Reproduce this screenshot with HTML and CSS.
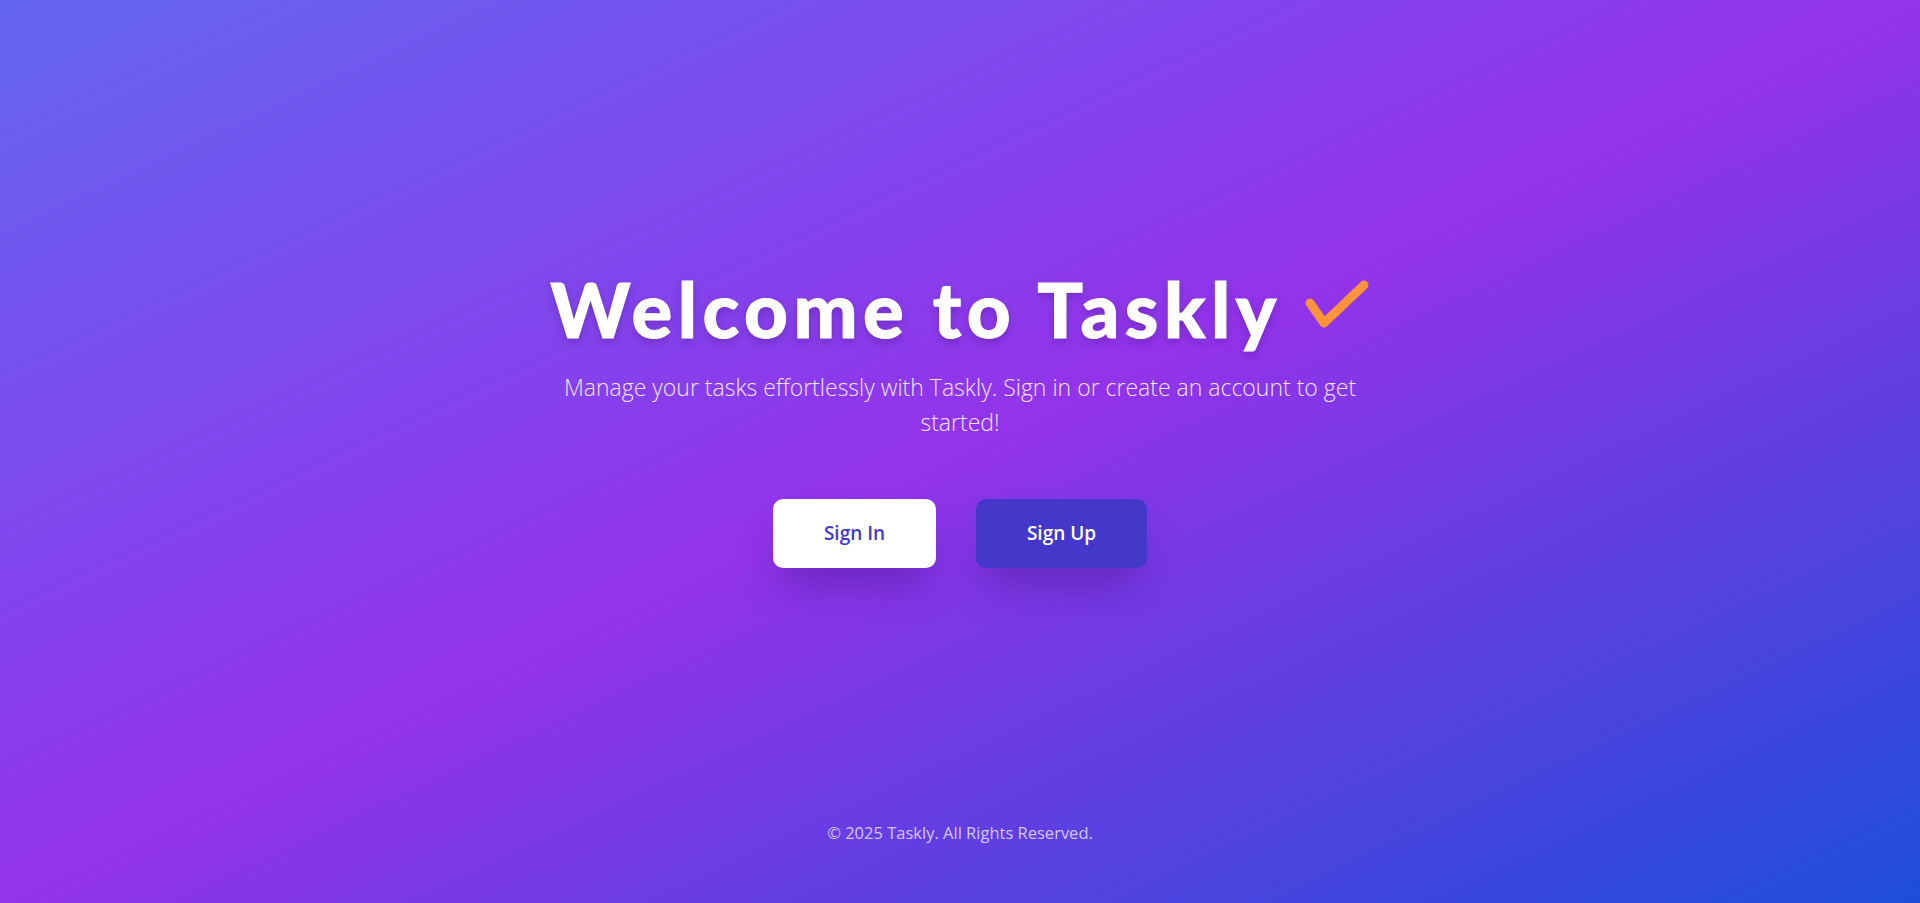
FILE: index.html
```html
<!DOCTYPE html>
<html lang="en">
<head>
<meta charset="utf-8">
<title>Taskly</title>
<link rel="stylesheet" href="styles.css">
</head>
<body>
<div class="page">
  <main class="hero">
    <h1 class="title">Welcome to Taskly
      <svg class="check" viewBox="0 0 66 50" width="66" height="50" aria-hidden="true">
        <polyline points="6,24 20,44 60,6" fill="none" stroke="#fb923c" stroke-width="9" stroke-linecap="round" stroke-linejoin="round"/>
      </svg>
    </h1>
    <p class="subtitle">Manage your tasks effortlessly with Taskly. Sign in or create an account to get started!</p>
    <div class="actions">
      <a class="btn btn-light" href="#">Sign In</a>
      <a class="btn btn-dark" href="#">Sign Up</a>
    </div>
  </main>
  <footer class="footer">© 2025 Taskly. All Rights Reserved.</footer>
</div>
</body>
</html>
```

FILE: styles.css
```css
* { box-sizing: border-box; }
html, body { margin: 0; padding: 0; height: 100%; }
body {
  font-family: "Open Sans", "Noto Sans", sans-serif;
  color: #fff;
  background: linear-gradient(to bottom right, #6366f1 0%, #9333ea 50%, #1d4ed8 100%);
  overflow: hidden;
}
.page {
  min-height: 100vh;
  display: flex;
  flex-direction: column;
}
.hero {
  flex: 1;
  display: flex;
  flex-direction: column;
  align-items: center;
  justify-content: center;
  text-align: center;
  padding-top: 33px;
}
.title {
  margin: 4px 0 0;
  font-family: "Lato", sans-serif;
  font-weight: 900;
  font-size: 76px;
  line-height: 1;
  letter-spacing: 5.5px;
  display: flex;
  align-items: center;
  gap: 22px;
  -webkit-text-stroke: 1px #fff;
  text-shadow: 0 4px 8px rgba(60, 20, 120, 0.35);
}
.check { display: block; margin-top: -10px; }
.subtitle {
  margin: 23px 0 0;
  max-width: 820px;
  font-weight: 300;
  font-size: 23px;
  line-height: 35px;
  color: #efe6ff;
}
.actions {
  margin-top: 59px;
  display: flex;
  gap: 40px;
}
.btn {
  display: block;
  height: 69px;
  line-height: 69px;
  border-radius: 10px;
  font-weight: 600;
  font-size: 19px;
  text-decoration: none;
  box-shadow: 0 25px 40px -10px rgba(60, 20, 130, 0.45);
}
.btn-light { width: 163px; background: #fff; color: #4338ca; }
.btn-dark { width: 171px; background: #4338ca; color: #fff; }
.footer {
  text-align: center;
  font-size: 16.5px;
  color: #d6c8fb;
  padding-bottom: 59px;
  padding-top: 20px;
}
```
